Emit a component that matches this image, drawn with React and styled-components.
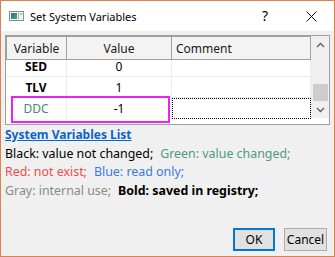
import React from 'react'
import styled, { createGlobalStyle } from "styled-components";

const GlobalStyle = createGlobalStyle`
  html, body { margin: 0; padding: 0; background: #fff; }
`;

// first row is scrolled partly out of view
const rows = [
    { name: 'SED', value: '0', state: 'bold', partial: true },
    { name: 'TLV', value: '1', state: 'bold' },
    { name: 'DDC', value: '-1', state: 'changed', focused: true },
];

function WindowIcon() {
    return (
        <svg width="15" height="10" viewBox="0 0 15 10">
            <defs>
                <linearGradient id="ig" x1="0" y1="0" x2="1" y2="1">
                    <stop offset="0" stopColor="#2f6f9a" />
                    <stop offset="1" stopColor="#49a56f" />
                </linearGradient>
            </defs>
            <rect x="0.5" y="0.5" width="14" height="9" fill="#f4f4f4" stroke="#8c8c8c" />
            <rect x="2" y="2" width="6" height="6" fill="url(#ig)" />
            <rect x="9" y="2" width="1" height="6" fill="#7fc9a0" />
            <rect x="11" y="2" width="2" height="2" fill="#b8b8b8" />
        </svg>
    );
}

function App() {
    return (
        <>
            <GlobalStyle />
            <Window>
                <TitleBar>
                    <WindowIcon />
                    <Title>Set System Variables</Title>
                    <CaptionButton className="help">?</CaptionButton>
                    <CaptionButton>
                        <svg width="11" height="11" viewBox="0 0 11 11">
                            <path d="M0.5 0.5 L10.5 10.5 M10.5 0.5 L0.5 10.5" stroke="#111" strokeWidth="1" fill="none" />
                        </svg>
                    </CaptionButton>
                </TitleBar>
                <Body>
                    <Grid>
                        <TablePart>
                            <HeaderRow>
                                <HeadCell $w={61} $first>Variable</HeadCell>
                                <HeadCell $w={105}>Value</HeadCell>
                                <HeadCell $w={139} $left>Comment</HeadCell>
                            </HeaderRow>
                            <RowsArea>
                                {rows.map(r => (
                                    <Row key={r.name} $partial={r.partial}>
                                        <Cell $w={61} $partial={r.partial} $state={r.state}>{r.name}</Cell>
                                        <Cell $w={105} $partial={r.partial}>{r.value}</Cell>
                                        <Cell $w={139} $partial={r.partial} $focused={r.focused}></Cell>
                                    </Row>
                                ))}
                            </RowsArea>
                        </TablePart>
                        <ScrollBar>
                            <ScrollArrow>
                                <svg width="9" height="6" viewBox="0 0 9 6">
                                    <path d="M1 5 L4.5 1.5 L8 5" stroke="#606060" strokeWidth="1.4" fill="none" />
                                </svg>
                            </ScrollArrow>
                            <Track>
                                <Thumb />
                            </Track>
                            <ScrollArrow>
                                <svg width="9" height="6" viewBox="0 0 9 6">
                                    <path d="M1 1 L4.5 4.5 L8 1" stroke="#606060" strokeWidth="1.4" fill="none" />
                                </svg>
                            </ScrollArrow>
                        </ScrollBar>
                        <Highlight />
                    </Grid>
                    <Legend>
                        <ListLink>System Variables List</ListLink>
                        <Line>
                            <Tone $c="#000">Black: value not changed;</Tone>
                            <Tone $c="#4f9a7f">Green: value changed;</Tone>
                        </Line>
                        <Line>
                            <Tone $c="#ee4c4c">Red: not exist;</Tone>
                            <Tone $c="#3d7bd8">Blue: read only;</Tone>
                        </Line>
                        <Line>
                            <Tone $c="#8a8a8a">Gray: internal use;</Tone>
                            <Tone $c="#000" $bold>Bold: saved in registry;</Tone>
                        </Line>
                    </Legend>
                    <Buttons>
                        <Button $default $w={42}>OK</Button>
                        <Button $w={43}>Cancel</Button>
                    </Buttons>
                </Body>
            </Window>
        </>
    );
}

const Window = styled.div`
  width: 335px;
  height: 257px;
  box-sizing: border-box;
  border: 1px solid #d9834f;
  display: flex;
  flex-direction: column;
  background: #f0f0f0;
  font-family: "Noto Sans", "Open Sans", sans-serif;
  font-size: 12px;
  color: #000;
  overflow: hidden;
`;

const TitleBar = styled.div`
  height: 30px;
  flex-shrink: 0;
  background: #fff;
  display: flex;
  align-items: center;
  padding-left: 8px;
  svg { display: block; }
`;

const Title = styled.div`
  flex: 1;
  margin-left: 6px;
  font-size: 11px;
  color: #000;
`;

const CaptionButton = styled.div`
  width: 46px;
  height: 30px;
  display: flex;
  align-items: center;
  justify-content: center;
  font-size: 14px;
  &.help { padding-bottom: 1px; box-sizing: border-box; }
`;

const Body = styled.div`
  flex: 1;
  display: flex;
  flex-direction: column;
  padding: 4px 4px 5px 4px;
`;

const Grid = styled.div`
  position: relative;
  height: 90px;
  box-sizing: border-box;
  border: 1px solid #a0a0a0;
  background: #fff;
  display: flex;
`;

const TablePart = styled.div`
  width: 305px;
  display: flex;
  flex-direction: column;
`;

const HeaderRow = styled.div`
  display: flex;
  height: 24px;
  box-sizing: border-box;
  border-top: 1px solid #a0a0a0;
  border-bottom: 1px solid #a0a0a0;
  background: #f3f3f3;
`;

const HeadCell = styled.div`
  width: ${p => p.$w}px;
  box-sizing: border-box;
  border-right: 1px solid #a0a0a0;
  border-left: ${p => (p.$first ? '1px solid #a0a0a0' : 'none')};
  display: flex;
  align-items: center;
  justify-content: ${p => (p.$left ? 'flex-start' : 'center')};
  padding-left: ${p => (p.$left ? '4px' : '0')};
  color: #1a1a1a;
`;

const RowsArea = styled.div`
  flex: 1;
  display: flex;
  flex-direction: column;
`;

const Row = styled.div`
  display: flex;
  flex-shrink: 0;
  height: ${p => (p.$partial ? 17 : 21)}px;
  box-sizing: border-box;
  border-bottom: 1px solid #ececec;
  &:last-child { border-bottom: none; }
`;

const Cell = styled.div`
  width: ${p => p.$w}px;
  box-sizing: border-box;
  border-right: 1px solid #ececec;
  display: flex;
  align-items: ${p => (p.$partial ? 'flex-start' : 'center')};
  padding-top: ${p => (p.$partial ? '1px' : '0')};
  line-height: ${p => (p.$partial ? '12px' : 'normal')};
  justify-content: center;
  font-weight: ${p => (p.$state === 'bold' ? 700 : 400)};
  color: ${p => (p.$state === 'changed' ? '#3f8e6e' : '#000')};
  outline: ${p => (p.$focused ? '1px dotted #000' : 'none')};
  outline-offset: -1px;
`;

const ScrollBar = styled.div`
  width: 18px;
  height: 82px;
  background: #f0f0f0;
  display: flex;
  flex-direction: column;
  align-items: center;
`;

const ScrollArrow = styled.div`
  height: 17px;
  width: 100%;
  display: flex;
  align-items: center;
  justify-content: center;
`;

const Track = styled.div`
  flex: 1;
  width: 100%;
  display: flex;
  flex-direction: column;
  justify-content: flex-end;
  align-items: center;
`;

const Thumb = styled.div`
  width: 15px;
  height: 17px;
  background: #cdcdcd;
`;

const Highlight = styled.div`
  position: absolute;
  left: 5px;
  top: 60px;
  width: 159px;
  height: 27px;
  box-sizing: border-box;
  border: 2px solid #ee22ee;
  pointer-events: none;
`;

const Legend = styled.div`
  margin-top: 1px;
  line-height: 18.5px;
  font-size: 12.4px;
`;

const ListLink = styled.div`
  color: #0b64cc;
  font-weight: 700;
  font-size: 12px;
  text-decoration: underline;
`;

const Line = styled.div`
  display: flex;
  gap: 7px;
  white-space: nowrap;
`;

const Tone = styled.span`
  color: ${p => p.$c};
  font-weight: ${p => (p.$bold ? 700 : 400)};
`;

const Buttons = styled.div`
  margin-top: auto;
  display: flex;
  justify-content: flex-end;
  gap: 9px;
  padding-right: 3px;
`;

const Button = styled.div`
  width: ${p => p.$w}px;
  height: 23px;
  box-sizing: border-box;
  background: #e1e1e1;
  border: ${p => (p.$default ? '2px solid #0078d7' : '1px solid #adadad')};
  display: flex;
  align-items: center;
  justify-content: center;
  color: #000;
`;

export default App
